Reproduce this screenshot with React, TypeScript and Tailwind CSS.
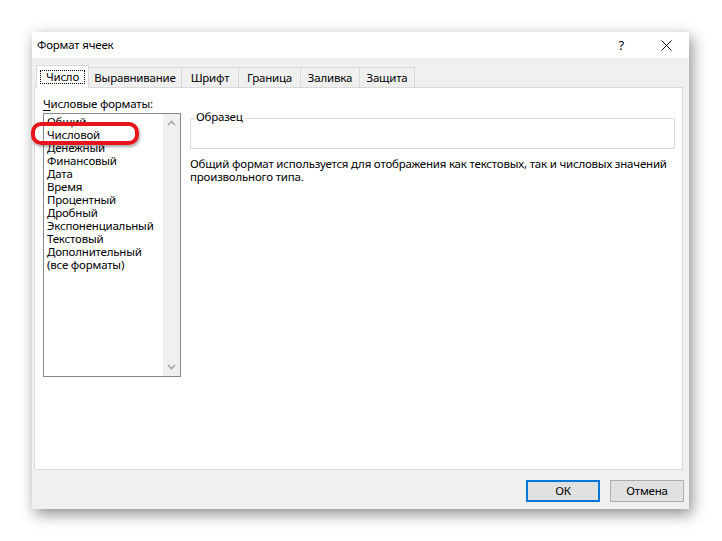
const TABS = [
  { label: 'Число', w: 'w-[53px]' },
  { label: 'Выравнивание', w: 'w-[94px]' },
  { label: 'Шрифт', w: 'w-[58px]' },
  { label: 'Граница', w: 'w-[63px]' },
  { label: 'Заливка', w: 'w-[60px]' },
  { label: 'Защита', w: 'w-[56px]' },
];

const FORMATS = [
  'Общий',
  'Числовой',
  'Денежный',
  'Финансовый',
  'Дата',
  'Время',
  'Процентный',
  'Дробный',
  'Экспоненциальный',
  'Текстовый',
  'Дополнительный',
  '(все форматы)',
];

function Chevron({ up }: { up?: boolean }) {
  return (
    <svg width="9" height="6" viewBox="0 0 9 6" className="block">
      <path
        d={up ? 'M1 5 L4.5 1.5 L8 5' : 'M1 1 L4.5 4.5 L8 1'}
        fill="none"
        stroke="#a6a6a6"
        strokeWidth="1.6"
      />
    </svg>
  );
}

export default function App() {
  return (
    <div
      className="h-[541px] w-[722px] bg-white pl-[32px] pt-[32px] text-[11.5px] tracking-[-0.2px] text-black"
      style={{ fontFamily: '"Segoe UI", "Noto Sans", sans-serif' }}
    >
      <div className="flex h-[477px] w-[657px] flex-col bg-[#f0f0f0] shadow-[3px_5px_14px_rgba(0,0,0,0.45)]">
        {/* title bar */}
        <div className="flex h-[26px] items-center bg-white pl-[5px]">
          <span className="leading-none">Формат ячеек</span>
          <span className="ml-auto mr-[37px] text-[13px] leading-none">?</span>
          <svg width="11" height="11" viewBox="0 0 11 11" className="mr-[17px]">
            <path d="M0.5 0.5 L10.5 10.5 M10.5 0.5 L0.5 10.5" stroke="#111" strokeWidth="1" />
          </svg>
        </div>

        {/* tabs */}
        <div className="ml-[2px] mr-[6px] mt-[7px] flex h-[22px] items-end pl-[2px]">
          {TABS.map((t, i) =>
            i === 0 ? (
              <div
                key={t.label}
                className={`relative z-10 -mb-px flex h-[23px] ${t.w} items-center justify-center border border-b-0 border-[#d9d9d9] bg-white`}
              >
                <span className="border border-dotted border-black px-[5px] leading-[12px]">{t.label}</span>
              </div>
            ) : (
              <div
                key={t.label}
                className={`-ml-px flex h-[20px] ${t.w} items-center justify-center border border-b-0 border-[#d9d9d9] bg-[#f0f0f0]`}
              >
                {t.label}
              </div>
            )
          )}
        </div>

        {/* panel */}
        <div className="ml-[2px] mr-[6px] flex h-[383px] border border-[#d9d9d9] bg-white pl-[8px] pr-[7px] pt-[9px]">
          <div className="flex w-[138px] shrink-0 flex-col">
            <div className="h-[16px] leading-[13px]">
              <span className="underline underline-offset-2">Ч</span>исловые форматы:
            </div>
            <div className="relative flex h-[264px] border border-[#828790] bg-white">
              <div className="flex-1 pl-[3px] pt-[1px]">
                {FORMATS.map((f) => (
                  <div key={f} className="h-[13px] whitespace-nowrap leading-[13px]">
                    {f}
                  </div>
                ))}
              </div>
              <div className="flex w-[17px] flex-col items-center justify-between bg-[#f0f0f0] py-[6px]">
                <Chevron up />
                <Chevron />
              </div>
              <div className="absolute left-[-13px] top-[8px] h-[23px] w-[108px] rounded-[10px] border-[4px] border-[#e8141b] shadow-[1px_2px_3px_rgba(0,0,0,0.35)]" />
            </div>
          </div>

          <div className="ml-[9px] flex min-w-0 flex-1 flex-col">
            <div className="relative mt-[21px] h-[31px] border border-[#dcdcdc]">
              <span className="absolute left-[4px] top-[-9px] bg-white px-[1px] leading-[14px]">Образец</span>
            </div>
            <p className="mt-[8px] leading-[13px]">
              Общий формат используется для отображения как текстовых, так и числовых значений
              <br />
              произвольного типа.
            </p>
          </div>
        </div>

        {/* buttons */}
        <div className="mr-[5px] mt-[10px] flex justify-end gap-[10px]">
          <button className="h-[22px] w-[74px] border-2 border-[#0078d7] bg-[#e1e1e1] leading-none">ОК</button>
          <button className="h-[22px] w-[74px] border border-[#adadad] bg-[#e1e1e1] leading-none">Отмена</button>
        </div>
      </div>
    </div>
  );
}
